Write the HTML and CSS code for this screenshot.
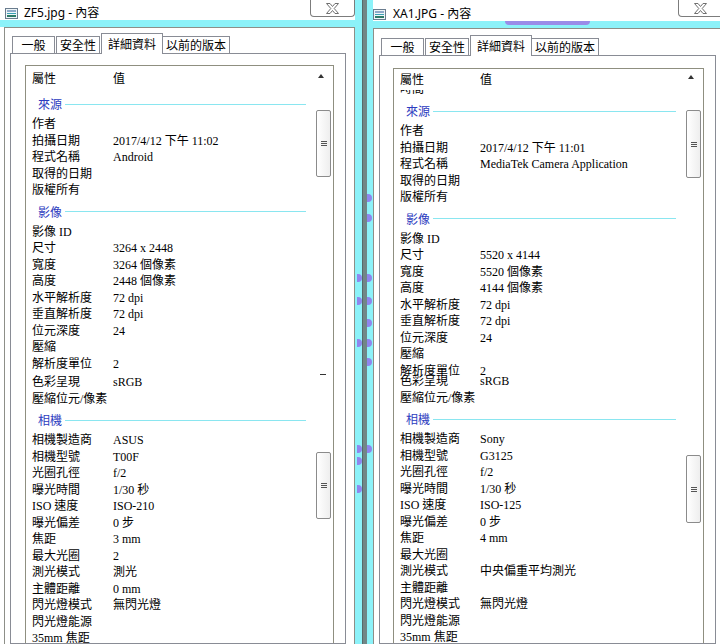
FILE: index.html
```html
<!DOCTYPE html>
<html lang="zh-Hant">

<head>
  <meta charset="UTF-8" />
  <title>內容</title>
  <link rel="stylesheet" href="styles.css">
</head>

<body>
  <div class="desk">

    <!-- 左邊視窗 -->
    <div class="window window-left">
      <div class="titlebar">
        <svg class="title-icon" width="13" height="11" viewBox="0 0 13 11">
          <rect x="0.5" y="0.5" width="12" height="10" fill="#eef5f8" stroke="#6a7c8e" />
          <rect x="2" y="2.5" width="9" height="1" fill="#2f5f98" />
          <rect x="2" y="5" width="9" height="1" fill="#39a0b4" />
          <rect x="2" y="7" width="9" height="2" fill="#2d7a66" />
        </svg>
        <span class="title">ZF5.jpg - 內容</span>
        <div class="close">
          <svg width="13" height="11" viewBox="0 0 13 11">
            <path d="M0.5 0.5h3.5l2.5 3 2.5-3h3.5l-4.3 5 4.3 5h-3.5l-2.5-3-2.5 3h-3.5l4.3-5z" fill="#fff" stroke="#707070" />
          </svg>
        </div>
      </div>
      <div class="strip"></div>
      <div class="frame">
        <div class="tabs">
          <div class="tab">一般</div>
          <div class="tab">安全性</div>
          <div class="tab tab-active">詳細資料</div>
          <div class="tab">以前的版本</div>
        </div>
        <div class="panel">
          <div class="lv">
            <div class="lv-head"><span class="k">屬性</span><span>值</span></div>

            <div class="grp">來源</div>
            <div class="row"><span class="k">作者</span></div>
            <div class="row"><span class="k">拍攝日期</span><span>2017/4/12 下午 11:02</span></div>
            <div class="row"><span class="k">程式名稱</span><span>Android</span></div>
            <div class="row"><span class="k">取得的日期</span></div>
            <div class="row"><span class="k">版權所有</span></div>

            <div class="grp">影像</div>
            <div class="row"><span class="k">影像 ID</span></div>
            <div class="row"><span class="k">尺寸</span><span>3264 x 2448</span></div>
            <div class="row"><span class="k">寬度</span><span>3264 個像素</span></div>
            <div class="row"><span class="k">高度</span><span>2448 個像素</span></div>
            <div class="row"><span class="k">水平解析度</span><span>72 dpi</span></div>
            <div class="row"><span class="k">垂直解析度</span><span>72 dpi</span></div>
            <div class="row"><span class="k">位元深度</span><span>24</span></div>
            <div class="row"><span class="k">壓縮</span></div>
            <div class="row"><span class="k">解析度單位</span><span>2</span></div>
            <div class="row row-gap"><span class="k">色彩呈現</span><span>sRGB</span></div>
            <div class="row"><span class="k">壓縮位元/像素</span></div>

            <div class="grp">相機</div>
            <div class="row"><span class="k">相機製造商</span><span>ASUS</span></div>
            <div class="row"><span class="k">相機型號</span><span>T00F</span></div>
            <div class="row"><span class="k">光圈孔徑</span><span>f/2</span></div>
            <div class="row"><span class="k">曝光時間</span><span>1/30 秒</span></div>
            <div class="row"><span class="k">ISO 速度</span><span>ISO-210</span></div>
            <div class="row"><span class="k">曝光偏差</span><span>0 步</span></div>
            <div class="row"><span class="k">焦距</span><span>3 mm</span></div>
            <div class="row"><span class="k">最大光圈</span><span>2</span></div>
            <div class="row"><span class="k">測光模式</span><span>測光</span></div>
            <div class="row"><span class="k">主體距離</span><span>0 mm</span></div>
            <div class="row"><span class="k">閃光燈模式</span><span>無閃光燈</span></div>
            <div class="row"><span class="k">閃光燈能源</span></div>
            <div class="row"><span class="k">35mm 焦距</span></div>

            <!-- 捲軸 -->
            <div class="sb-up"></div>
            <div class="thumb thumb-a"><div class="grip"></div></div>
            <div class="sb-dash"></div>
            <div class="thumb thumb-b"><div class="grip"></div></div>
          </div>
        </div>
      </div>
    </div>

    <!-- 中間的邊框 -->
    <div class="seam">
      <div class="seam-bar"></div>
      <span class="blob blob-r b1"></span>
      <span class="blob blob-r b2"></span>
      <span class="blob blob-l b3"></span>
      <span class="blob blob-r b3"></span>
      <span class="blob blob-l b4"></span>
      <span class="blob blob-r b4"></span>
      <span class="blob blob-r b5"></span>
      <span class="blob blob-l b6"></span>
      <span class="blob blob-r b6"></span>
      <span class="blob blob-r b7"></span>
      <span class="blob blob-l b8"></span>
      <span class="blob blob-r b8"></span>
      <span class="blob blob-l b9"></span>
      <span class="blob blob-l b10"></span>
    </div>

    <!-- 右邊視窗 -->
    <div class="window window-right">
      <div class="titlebar">
        <svg class="title-icon" width="13" height="11" viewBox="0 0 13 11">
          <rect x="0.5" y="0.5" width="12" height="10" fill="#eef5f8" stroke="#6a7c8e" />
          <rect x="2" y="2.5" width="9" height="1" fill="#2f5f98" />
          <rect x="2" y="5" width="9" height="1" fill="#39a0b4" />
          <rect x="2" y="7" width="9" height="2" fill="#2d7a66" />
        </svg>
        <span class="title">XA1.JPG - 內容</span>
        <div class="close">
          <svg width="13" height="11" viewBox="0 0 13 11">
            <path d="M0.5 0.5h3.5l2.5 3 2.5-3h3.5l-4.3 5 4.3 5h-3.5l-2.5-3-2.5 3h-3.5l4.3-5z" fill="#fff" stroke="#707070" />
          </svg>
        </div>
      </div>
      <div class="strip"><div class="strip-blob"></div></div>
      <div class="frame">
        <div class="tabs">
          <div class="tab">一般</div>
          <div class="tab">安全性</div>
          <div class="tab tab-active">詳細資料</div>
          <div class="tab">以前的版本</div>
        </div>
        <div class="panel">
          <div class="lv">
            <div class="lv-head"><span class="k">屬性</span><span>值</span></div>
            <div class="clip"><span>時間</span></div>

            <div class="grp">來源</div>
            <div class="row"><span class="k">作者</span></div>
            <div class="row"><span class="k">拍攝日期</span><span>2017/4/12 下午 11:01</span></div>
            <div class="row"><span class="k">程式名稱</span><span>MediaTek Camera Application</span></div>
            <div class="row"><span class="k">取得的日期</span></div>
            <div class="row"><span class="k">版權所有</span></div>

            <div class="grp">影像</div>
            <div class="row"><span class="k">影像 ID</span></div>
            <div class="row"><span class="k">尺寸</span><span>5520 x 4144</span></div>
            <div class="row"><span class="k">寬度</span><span>5520 個像素</span></div>
            <div class="row"><span class="k">高度</span><span>4144 個像素</span></div>
            <div class="row"><span class="k">水平解析度</span><span>72 dpi</span></div>
            <div class="row"><span class="k">垂直解析度</span><span>72 dpi</span></div>
            <div class="row"><span class="k">位元深度</span><span>24</span></div>
            <div class="row"><span class="k">壓縮</span></div>
            <div class="row"><span class="k">解析度單位</span><span>2</span></div>
            <div class="row row-tight"><span class="k">色彩呈現</span><span>sRGB</span></div>
            <div class="row"><span class="k">壓縮位元/像素</span></div>

            <div class="grp">相機</div>
            <div class="row"><span class="k">相機製造商</span><span>Sony</span></div>
            <div class="row"><span class="k">相機型號</span><span>G3125</span></div>
            <div class="row"><span class="k">光圈孔徑</span><span>f/2</span></div>
            <div class="row"><span class="k">曝光時間</span><span>1/30 秒</span></div>
            <div class="row"><span class="k">ISO 速度</span><span>ISO-125</span></div>
            <div class="row"><span class="k">曝光偏差</span><span>0 步</span></div>
            <div class="row"><span class="k">焦距</span><span>4 mm</span></div>
            <div class="row"><span class="k">最大光圈</span></div>
            <div class="row"><span class="k">測光模式</span><span>中央偏重平均測光</span></div>
            <div class="row"><span class="k">主體距離</span></div>
            <div class="row"><span class="k">閃光燈模式</span><span>無閃光燈</span></div>
            <div class="row"><span class="k">閃光燈能源</span></div>
            <div class="row"><span class="k">35mm 焦距</span></div>

            <!-- 捲軸 -->
            <div class="sb-up"></div>
            <div class="thumb thumb-a"><div class="grip"></div></div>
            <div class="thumb thumb-b"><div class="grip"></div></div>
          </div>
        </div>
      </div>
    </div>

  </div>
</body>

</html>
```

FILE: styles.css
```css
* {
  box-sizing: border-box;
}

html,
body {
  margin: 0;
  padding: 0;
}

body {
  width: 720px;
  height: 644px;
  overflow: hidden;
  background: #fff;
  font-family: "Liberation Serif", "Noto Sans CJK TC", serif;
  font-size: 12px;
  color: #000;
}

.desk {
  display: flex;
  height: 644px;
}

/* 視窗 */
.window {
  display: flex;
  flex-direction: column;
  flex: none;
}

.window-left {
  width: 355px;
}

.window-right {
  width: 350px;
}

.titlebar {
  display: flex;
  align-items: flex-start;
  height: 20px;
  padding-left: 5px;
  font-family: "Noto Sans", "Noto Sans CJK TC", sans-serif;
}

.window-right .titlebar {
  height: 21px;
  padding-left: 0;
}

.title-icon {
  flex: none;
  margin-top: 8px;
}

.window-right .title-icon {
  margin-top: 9px;
}

.title {
  margin-left: 6px;
  margin-top: 6px;
  font-size: 12px;
  line-height: 14px;
  white-space: nowrap;
}

.window-right .title {
  margin-left: 7px;
  margin-top: 7px;
}

.close {
  margin-left: auto;
  width: 45px;
  height: 17px;
  border: 1px solid #7c7c7c;
  border-top: none;
  border-radius: 0 0 4px 4px;
  background: #fff;
  display: flex;
  align-items: center;
  justify-content: center;
}

.strip {
  display: flex;
  height: 7px;
  background: #8cf2f9;
}

.strip-blob {
  margin-left: 132px;
  width: 85px;
  height: 4px;
  background: #9a8ce8;
  border-radius: 0 0 40px 40px;
}

.frame {
  flex: 1;
  display: flex;
  flex-direction: column;
  margin-left: 4px;
  border-top: 1px solid #8d8f88;
  border-left: 1px solid #8d8f88;
  border-right: 1px solid #8d8f88;
  background: #fff;
  overflow: hidden;
}

.window-right .frame {
  margin-left: 0;
  border-right: none;
}

/* 分頁 */
.tabs {
  display: flex;
  align-items: flex-end;
  height: 20px;
  margin: 5px 0 0 7px;
  font-family: "Noto Sans CJK TC", sans-serif;
}

.window-right .tabs {
  margin-top: 6px;
}

.tab {
  height: 17px;
  min-width: 43px;
  padding: 0 3px;
  margin-right: 1px;
  line-height: 16px;
  text-align: center;
  border: 1px solid #898c95;
  border-bottom: none;
  background: #fff;
  white-space: nowrap;
}

.tab-active {
  position: relative;
  z-index: 1;
  height: 21px;
  line-height: 19px;
  padding: 0 6px;
  margin-right: -1px;
  margin-bottom: -1px;
}

.panel {
  flex: 1;
  width: 336px;
  margin-left: 5px;
  padding: 11px 11px 0 14px;
  border: 1px solid #898c95;
  overflow: hidden;
}

.window-right .panel {
  width: 337px;
  padding: 12px 11px 0 13px;
}

/* 清單 */
.lv {
  position: relative;
  height: 620px;
  border: 1px solid #8f8f80;
  background: #fff;
}

.lv-head {
  display: flex;
  height: 25px;
  padding: 5px 0 0 6px;
  line-height: 16px;
}

.window-right .lv-head {
  height: 21px;
  padding-top: 3px;
}

.clip {
  height: 8px;
  overflow: hidden;
  padding-left: 6px;
}

.clip span {
  display: block;
  line-height: 16px;
  margin-top: -9px;
}

.k {
  width: 81px;
  flex: none;
}

.window-right .k {
  width: 80px;
}

.row {
  display: flex;
  height: 16.5px;
  line-height: 16.5px;
  padding-left: 6px;
  white-space: nowrap;
}

.row-gap {
  margin-top: 2px;
}

.row-tight {
  margin-top: -6px;
}

.grp {
  display: flex;
  align-items: center;
  height: 16.5px;
  margin: 5px 0 3.5px;
  padding-left: 12px;
  color: #2d3cc0;
}

.grp::after {
  content: "";
  flex: 1;
  height: 1px;
  margin: 0 27px 0 3px;
  background: #8ae6f0;
}

/* 捲軸 */
.sb-up {
  position: absolute;
  top: 8px;
  right: 9px;
  width: 0;
  height: 0;
  border-left: 3.5px solid transparent;
  border-right: 3.5px solid transparent;
  border-bottom: 4px solid #333;
}

.window-right .sb-up {
  top: 6px;
}

.thumb {
  position: absolute;
  right: 2px;
  width: 15px;
  height: 67px;
  border: 1px solid #8b8b8b;
  border-radius: 2px;
  background: linear-gradient(to right, #fff, #eeeeee);
  display: flex;
  align-items: center;
  justify-content: center;
}

.thumb-a {
  top: 44px;
}

.thumb-b {
  top: 386px;
}

.window-right .thumb {
  height: 68px;
}

.window-right .thumb-a {
  top: 41px;
}

.grip {
  width: 6px;
  height: 5px;
  background: repeating-linear-gradient(#555 0 1px, transparent 1px 2px);
}

.sb-dash {
  position: absolute;
  top: 308px;
  right: 7px;
  width: 6px;
  height: 1px;
  background: #333;
}

/* 中間 */
.seam {
  position: relative;
  width: 18px;
  flex: none;
  padding-left: 7px;
  background: #8cf2f9;
}

.seam-bar {
  width: 5px;
  height: 100%;
  background: #718787;
  border-left: 1px solid #566a6a;
}

.blob {
  position: absolute;
  width: 5px;
  height: 8px;
  background: #8f86ee;
  border-radius: 0 4px 4px 0;
}

.blob-r {
  left: 12px;
}

.blob-l {
  left: 2px;
}

.b1 { top: 194px; }
.b2 { top: 214px; }
.b3 { top: 274px; }
.b4 { top: 297px; }
.b5 { top: 319px; }
.b6 { top: 339px; }
.b7 { top: 358px; }
.b8 { top: 445px; }
.b9 { top: 457px; }
.b10 { top: 485px; }
```
